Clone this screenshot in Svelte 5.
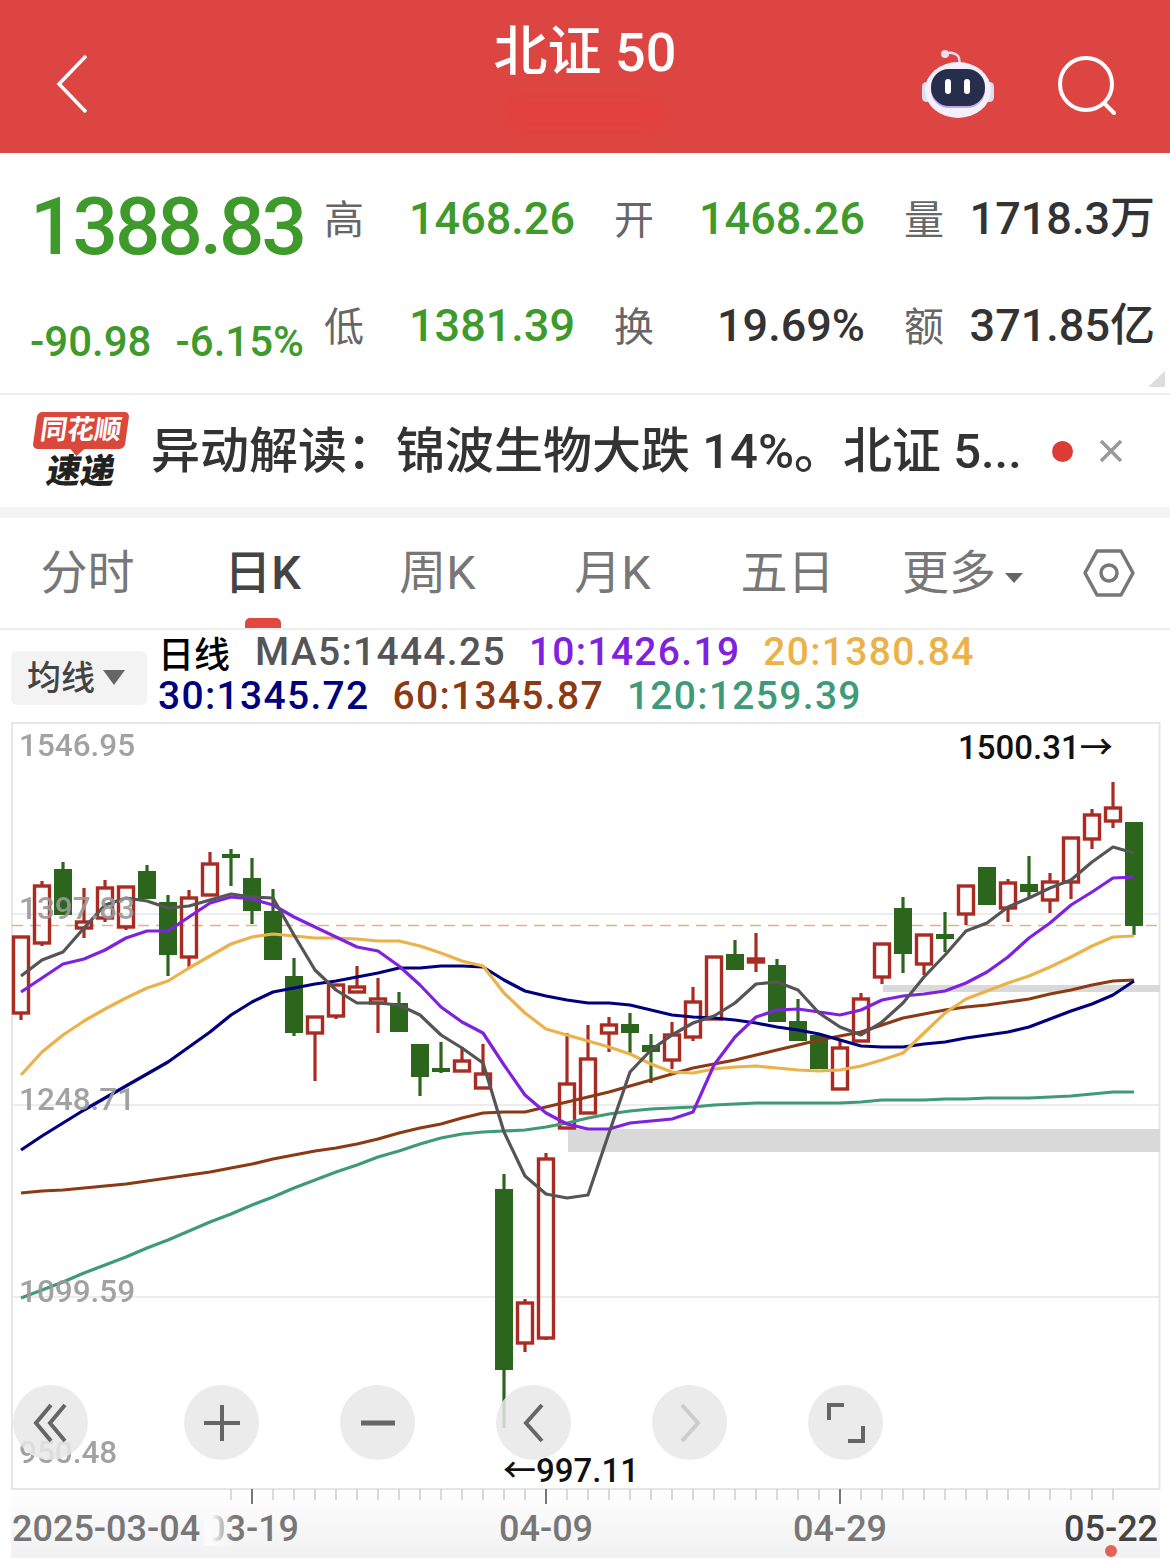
<script>
	// quote figures
	const quote = [
		[['高', '1468.26', 'down'], ['开', '1468.26', 'down'], ['量', '1718.3万', 'cjk']],
		[['低', '1381.39', 'down'], ['换', '19.69%', ''], ['额', '371.85亿', 'cjk']]
	];
	const tabs = ['分时', '日K', '周K', '月K', '五日'];

	const legend = [
		[
			['MA5:1444.25', '#555'],
			['10:1426.19', '#7f22e0'],
			['20:1380.84', '#ecb24a']
		],
		[
			['30:1345.72', '#00007f'],
			['60:1345.87', '#8b3a13'],
			['120:1259.39', '#3f9a77']
		]
	];

	// up (red, hollow) / down (green, filled): [up, bodyTop, bodyBottom, wickTop, wickBottom]
	const candles = [
		[1, 937, 1013, 937, 1020], [1, 886, 943, 881, 946], [0, 869, 915, 862, 915], [1, 922, 928, 888, 938],
		[1, 888, 918, 880, 922], [1, 887, 927, 887, 930], [0, 871, 899, 865, 899], [0, 902, 955, 895, 976],
		[1, 898, 957, 890, 968], [1, 864, 895, 852, 895], [0, 854, 858, 849, 886], [0, 878, 911, 858, 924],
		[0, 911, 960, 889, 960], [0, 976, 1033, 958, 1036], [1, 1017, 1033, 1017, 1081], [1, 985, 1016, 985, 1019],
		[1, 987, 992, 966, 992], [1, 999, 1003, 978, 1033], [0, 1003, 1032, 992, 1032], [0, 1044, 1077, 1044, 1096],
		[0, 1068, 1072, 1042, 1073], [1, 1061, 1071, 1047, 1071], [1, 1074, 1088, 1044, 1088], [0, 1189, 1370, 1174, 1428],
		[1, 1303, 1343, 1299, 1352], [1, 1159, 1338, 1153, 1340], [1, 1084, 1128, 1033, 1128], [1, 1059, 1113, 1025, 1113],
		[1, 1025, 1033, 1017, 1052], [0, 1024, 1033, 1013, 1053], [0, 1045, 1052, 1034, 1083], [1, 1035, 1060, 1022, 1069],
		[1, 1002, 1037, 987, 1041], [1, 957, 1019, 957, 1019], [0, 954, 970, 940, 970], [1, 959, 962, 933, 972],
		[0, 965, 1022, 959, 1022], [0, 1021, 1041, 999, 1041], [0, 1035, 1069, 1035, 1069], [1, 1048, 1089, 1040, 1089],
		[1, 999, 1041, 993, 1041], [1, 944, 977, 944, 984], [0, 908, 954, 897, 973], [1, 935, 964, 935, 975],
		[0, 934, 939, 912, 952], [1, 886, 914, 886, 925], [0, 867, 905, 867, 905], [1, 883, 908, 879, 922],
		[0, 884, 892, 856, 897], [1, 882, 900, 873, 913], [1, 838, 882, 838, 899], [1, 815, 839, 809, 849],
		[1, 808, 821, 782, 828], [0, 822, 926, 822, 935]
	];

	// y values per trading day, x = 21 + 21 * i
	const ma5 = [976, 960, 952, 928, 905, 898, 901, 908, 906, 900, 894, 897, 898, 935, 970, 990, 1003, 1003, 1005, 1015, 1035, 1048, 1063, 1132, 1176, 1194, 1198, 1195, 1133, 1072, 1050, 1035, 1023, 1016, 1003, 984, 982, 990, 1013, 1027, 1035, 1022, 1003, 977, 955, 931, 923, 907, 898, 888, 880, 862, 847, 853];
	const ma10 = [992, 978, 964, 959, 950, 938, 931, 931, 917, 903, 897, 899, 905, 917, 927, 937, 947, 951, 966, 985, 1007, 1022, 1033, 1065, 1095, 1113, 1124, 1129, 1129, 1123, 1121, 1119, 1112, 1065, 1037, 1017, 1010, 1009, 1012, 1015, 1010, 1000, 996, 994, 991, 983, 972, 957, 938, 923, 905, 892, 878, 877];
	const ma20 = [1075, 1052, 1035, 1021, 1009, 998, 988, 981, 968, 956, 944, 937, 934, 936, 938, 938, 939, 941, 941, 946, 953, 961, 966, 993, 1013, 1029, 1035, 1041, 1047, 1054, 1064, 1072, 1073, 1069, 1067, 1066, 1068, 1070, 1071, 1070, 1066, 1060, 1053, 1033, 1013, 999, 991, 983, 976, 967, 957, 946, 937, 936];
	const ma30 = [1150, 1136, 1123, 1110, 1098, 1086, 1074, 1062, 1047, 1032, 1015, 1002, 992, 988, 984, 981, 977, 973, 968, 968, 966, 966, 967, 980, 991, 996, 1000, 1003, 1003, 1005, 1010, 1015, 1017, 1018, 1020, 1023, 1027, 1030, 1034, 1040, 1046, 1047, 1047, 1044, 1042, 1038, 1035, 1032, 1027, 1019, 1011, 1004, 995, 981];
	const ma60 = [1193, 1191, 1190, 1188, 1186, 1184, 1181, 1178, 1175, 1172, 1168, 1164, 1159, 1155, 1151, 1148, 1144, 1139, 1133, 1128, 1124, 1118, 1113, 1112, 1112, 1107, 1102, 1097, 1092, 1086, 1080, 1074, 1068, 1064, 1060, 1055, 1050, 1045, 1040, 1036, 1032, 1025, 1018, 1014, 1010, 1007, 1005, 1002, 999, 994, 990, 985, 981, 980];
	const ma120 = [1298, 1290, 1282, 1273, 1265, 1257, 1248, 1240, 1231, 1222, 1214, 1205, 1197, 1188, 1180, 1172, 1165, 1157, 1151, 1144, 1138, 1134, 1132, 1131, 1130, 1127, 1123, 1118, 1114, 1111, 1109, 1108, 1107, 1105, 1104, 1103, 1103, 1103, 1103, 1103, 1102, 1100, 1100, 1100, 1099, 1099, 1098, 1098, 1098, 1097, 1096, 1094, 1092, 1092];
	const lines = [
		[ma120, '#3f9a77'],
		[ma60, '#8b3a13'],
		[ma30, '#00007f'],
		[ma20, '#ecb24a'],
		[ma10, '#7f22e0'],
		[ma5, '#555']
	];
	const cx = (i) => 21 + 21 * i;
	const pts = (ys) => ys.map((y, i) => cx(i) + ',' + y).join(' ');

	const priceLabels = [
		['1546.95', 756],
		['1397.83', 919],
		['1248.71', 1110],
		['1099.59', 1302],
		['950.48', 1463]
	];
	const dates = [
		['2025-03-04', 12, '#777'],
		['03-19', 205, '#777'],
		['04-09', 499, '#777'],
		['04-29', 793, '#777'],
		['05-22', 1064, '#444']
	];
	const ticks = Array.from({ length: 43 }, (_, i) => 231 + 21 * i);
	const majors = [252, 546, 840, 1134];
</script>

<div class="page">
	<header class="top">
		<svg class="back" width="34" height="60" viewBox="0 0 34 60">
			<path d="M31 2 L4 30 L31 58" fill="none" stroke="#fff" stroke-width="3.5" />
		</svg>
		<div class="title">
			<div class="name">北证 50</div>
			<div class="blur"></div>
		</div>
		<svg class="robot" width="74" height="70" viewBox="0 0 74 70">
			<path d="M24 6 C27 2 33 4 36 6 C39 8 38 12 39 16" fill="none" stroke="#e9d8ee" stroke-width="2.5" />
			<circle cx="24" cy="5" r="4" fill="#efdfef" />
			<rect x="1" y="33" width="9" height="20" rx="4.5" fill="#dcdcf2" />
			<rect x="64" y="33" width="9" height="20" rx="4.5" fill="#dcdcf2" />
			<ellipse cx="37" cy="41" rx="33" ry="28" fill="#f3f0fb" />
			<rect x="10" y="21" width="54" height="38" rx="18" fill="#b9a8ec" />
			<rect x="10" y="20" width="54" height="37" rx="18" fill="#272e4c" />
			<rect x="24" y="30" width="6" height="15" rx="3" fill="#fff" />
			<rect x="43" y="30" width="6" height="15" rx="3" fill="#fff" />
		</svg>
		<svg class="search" width="60" height="60" viewBox="0 0 60 60">
			<circle cx="29" cy="28" r="26" fill="none" stroke="#fff" stroke-width="4" />
			<path d="M47 47 L57 57" stroke="#fff" stroke-width="4" stroke-linecap="round" />
		</svg>
	</header>

	<section class="quote">
		<div class="now">
			<div class="price">1388.83</div>
			<div class="change"><span>-90.98</span><span>-6.15%</span></div>
		</div>
		<div class="figures">
			{#each quote as row}
				{#each row as [label, value, tone]}
					<div class="pair">
						<span class="label">{label}</span>
						<span class="value" class:down={tone === 'down'} class:cjk={tone === 'cjk'}>{value}</span>
					</div>
				{/each}
			{/each}
		</div>
		<div class="corner"></div>
	</section>

	<section class="news">
		<div class="logo">
			<div class="bubble"><span>同花顺</span></div>
			<div class="fast">速递</div>
		</div>
		<div class="headline">异动解读：锦波生物大跌 14%。北证 5...</div>
		<span class="dot"></span>
		<svg class="close" width="26" height="26" viewBox="0 0 26 26">
			<path d="M3 3 L23 23 M23 3 L3 23" stroke="#999" stroke-width="3.5" />
		</svg>
	</section>

	<nav class="tabs">
		{#each tabs as tab, i}
			<div class="tab" class:active={i === 1}>{tab}</div>
		{/each}
		<div class="tab more">更多<i></i></div>
		<svg class="hex" width="52" height="50" viewBox="0 0 52 50">
			<path d="M14 3 H38 L50 25 L38 47 H14 L2 25 Z" fill="none" stroke="#777" stroke-width="3.5" stroke-linejoin="round" />
			<circle cx="26" cy="25" r="8" fill="none" stroke="#777" stroke-width="3.5" />
		</svg>
	</nav>

	<section class="legend">
		<div class="avg">均线<i></i></div>
		<div class="ma">
			<div class="ma-row">
				<b>日线</b>
				{#each legend[0] as [text, color]}
					<span style="color: {color}">{text}</span>
				{/each}
			</div>
			<div class="ma-row">
				{#each legend[1] as [text, color]}
					<span style="color: {color}">{text}</span>
				{/each}
			</div>
		</div>
	</section>

	<div class="chart">
		<svg width="1170" height="836" viewBox="0 722 1170 836">
			<defs>
				<linearGradient id="foot" x1="0" y1="0" x2="0" y2="1">
					<stop offset="0" stop-color="#fff" />
					<stop offset="1" stop-color="#f1f1f1" />
				</linearGradient>
				<linearGradient id="fade" x1="0" y1="0" x2="1" y2="0">
					<stop offset="0.25" stop-color="#fbfbfb" />
					<stop offset="1" stop-color="#fbfbfb" stop-opacity="0" />
				</linearGradient>
			</defs>

			<rect x="11" y="1489" width="1149" height="69" fill="url(#foot)" />
			<rect x="12" y="723" width="1147.5" height="766" fill="#fff" stroke="#e6e6e6" stroke-width="2" />
			<path d="M12 914 H1160 M12 1105 H1160 M12 1297 H1160" stroke="#e6e6e6" stroke-width="1.5" />

			<rect x="568" y="1129" width="592" height="23" fill="#d9d9d9" />
			<rect x="883" y="985" width="277" height="7" fill="#d9d9d9" />

			<path d="M12 925.5 H1160" stroke="#d9b48c" stroke-width="1.5" stroke-dasharray="11 7" />

			{#each candles as [up, top, bottom, wickTop, wickBottom], i}
				{#if up}
					<path d="M{cx(i)} {wickTop} V{top} M{cx(i)} {bottom} V{wickBottom}" stroke="#a92b22" stroke-width="3.2" />
					<rect x={cx(i) - 7.5} y={top} width="15" height={bottom - top} fill="none" stroke="#a92b22" stroke-width="3.4" />
				{:else}
					<path d="M{cx(i)} {wickTop} V{wickBottom}" stroke="#2c661c" stroke-width="3.2" />
					<rect x={cx(i) - 9} y={top} width="18" height={bottom - top} fill="#2c661c" />
				{/if}
			{/each}

			{#each lines as [ys, color]}
				<polyline points={pts(ys)} fill="none" stroke={color} stroke-width="3.2" stroke-linejoin="round" />
			{/each}

			{#each priceLabels as [text, y]}
				<text class="axis-price" x="19" {y}>{text}</text>
			{/each}

			<text class="mark" x="958" y="759">1500.31→</text>
			<text class="mark" x="503" y="1482">←997.11</text>

			{#each ticks as x}
				<path d="M{x} 1489 V{majors.includes(x) ? 1504 : 1500}" stroke={majors.includes(x) ? '#777' : '#ccc'} stroke-width={majors.includes(x) ? 2 : 1.5} />
			{/each}
			{#each dates as [text, x, color]}
				<text class="date" {x} y="1541" fill={color}>{text}</text>
			{/each}
			<rect x="204" y="1512" width="30" height="34" fill="url(#fade)" />
			<circle cx="1111" cy="1551" r="6" fill="#e0645c" />
		</svg>

		<div class="controls">
			<button aria-label="first">
				<svg width="40" height="44" viewBox="0 0 40 44"><path d="M20 4 L5 22 L20 40 M34 4 L19 22 L34 40" fill="none" stroke="#666" stroke-width="4" /></svg>
			</button>
			<button aria-label="zoom in">
				<svg width="40" height="44" viewBox="0 0 40 44"><path d="M2 22 H38 M20 4 V40" fill="none" stroke="#666" stroke-width="4" /></svg>
			</button>
			<button aria-label="zoom out">
				<svg width="40" height="44" viewBox="0 0 40 44"><path d="M3 22 H37" fill="none" stroke="#666" stroke-width="5" /></svg>
			</button>
			<button aria-label="previous">
				<svg width="40" height="44" viewBox="0 0 40 44"><path d="M28 4 L12 22 L28 40" fill="none" stroke="#666" stroke-width="4" /></svg>
			</button>
			<button aria-label="next">
				<svg width="40" height="44" viewBox="0 0 40 44"><path d="M12 4 L28 22 L12 40" fill="none" stroke="#ccc" stroke-width="4" /></svg>
			</button>
			<button aria-label="fullscreen">
				<svg width="40" height="44" viewBox="0 0 40 44"><path d="M3 19 V4 H18 M37 25 V40 H22" fill="none" stroke="#666" stroke-width="4" /></svg>
			</button>
		</div>
	</div>
</div>

<style>
	:global(body) {
		margin: 0;
		background: #fff;
	}

	.page {
		width: 1170px;
		height: 1558px;
		overflow: hidden;
		font-family: Roboto, 'Noto Sans CJK SC', sans-serif;
	}

	.top {
		height: 153px;
		background: #dd4542;
		display: flex;
		align-items: flex-start;
		position: relative;
	}

	.back {
		margin: 54px 0 0 55px;
	}

	.title {
		position: absolute;
		left: 0;
		right: 0;
		top: 22px;
		text-align: center;
		color: #fff;
	}

	.name {
		font-size: 54px;
		line-height: 62px;
		font-weight: 500;
	}

	.blur {
		width: 160px;
		height: 30px;
		margin: 15px auto 0;
		background: #e63f3a;
		opacity: 0.7;
		filter: blur(9px);
	}

	.robot {
		margin: 49px 0 0 auto;
	}

	.search {
		margin: 56px 53px 0 62px;
	}

	.quote {
		height: 240px;
		border-bottom: 2px solid #eee;
		display: flex;
		position: relative;
	}

	.now {
		width: 324px;
		flex: none;
		padding-left: 30px;
		box-sizing: border-box;
	}

	.price {
		font-size: 80px;
		line-height: 94px;
		margin: 27px 0 0 0;
		font-weight: 500;
		letter-spacing: -3px;
		color: #3f9a2c;
	}

	.change {
		display: flex;
		justify-content: space-between;
		width: 274px;
		margin-top: 44px;
		font-size: 42px;
		line-height: 48px;
		font-weight: 500;
		color: #3f9a2c;
	}

	.figures {
		display: grid;
		grid-template-columns: repeat(3, 251px);
		column-gap: 39px;
		grid-auto-rows: 107px;
		margin-top: 12px;
		align-items: center;
	}

	.pair {
		display: flex;
		justify-content: space-between;
		align-items: center;
	}

	.label {
		font-size: 40px;
		margin-top: -4px;
		color: #666;
	}

	.value {
		font-size: 45px;
		font-weight: 500;
		color: #333;
		white-space: nowrap;
	}

	.value.down {
		color: #3f9a2c;
	}

	.value.cjk {
		margin-top: -8px;
	}

	.corner {
		position: absolute;
		right: 5px;
		bottom: 6px;
		width: 0;
		height: 0;
		border-left: 17px solid transparent;
		border-bottom: 16px solid #ddd;
	}

	.news {
		height: 112px;
		border-bottom: 11px solid #f4f4f4;
		display: flex;
		align-items: center;
	}

	.logo {
		width: 92px;
		margin-left: 35px;
		flex: none;
	}

	.bubble {
		height: 37px;
		background: #d9483b;
		border-radius: 5px;
		transform: skewX(-8deg);
		text-align: center;
		position: relative;
	}

	.bubble::after {
		content: '';
		position: absolute;
		left: 38px;
		bottom: -7px;
		border: 7px solid transparent;
		border-top-color: #d9483b;
		border-bottom: 0;
	}

	.bubble span {
		color: #fff;
		font-size: 27px;
		font-weight: 700;
		line-height: 37px;
		display: block;
	}

	.fast {
		font-size: 34px;
		font-weight: 900;
		line-height: 38px;
		color: #222;
		text-align: center;
		margin-top: 3px;
		transform: skewX(-10deg);
	}

	.headline {
		margin: -10px 0 0 24px;
		width: 900px;
		font-size: 49px;
		font-weight: 500;
		color: #333;
		white-space: nowrap;
	}

	.dot {
		width: 21px;
		height: 21px;
		border-radius: 50%;
		background: #dd3c36;
		flex: none;
		margin-left: 1px;
	}

	.close {
		margin-left: 25px;
		flex: none;
	}

	.tabs {
		height: 110px;
		border-bottom: 2px solid #eee;
		display: flex;
		align-items: center;
	}

	.tab {
		width: 175px;
		flex: none;
		text-align: center;
		font-size: 47px;
		color: #777;
		position: relative;
		line-height: 110px;
		height: 110px;
	}

	.tab.active {
		color: #444;
		font-weight: 500;
	}

	.tab.active::after {
		content: '';
		position: absolute;
		left: 70px;
		bottom: 0;
		width: 36px;
		height: 10px;
		border-radius: 5px 5px 0 0;
		background: #e1483f;
	}

	.tab.more i {
		display: inline-block;
		margin-left: 9px;
		vertical-align: 6px;
		border: 9px solid transparent;
		border-top: 10px solid #666;
		border-bottom: 0;
	}

	.hex {
		margin-left: 33px;
	}

	.legend {
		height: 92px;
		display: flex;
		align-items: center;
	}

	.avg {
		width: 136px;
		height: 54px;
		margin: 4px 0 0 11px;
		flex: none;
		border-radius: 6px;
		background: #f3f3f3;
		color: #444;
		font-size: 34px;
		font-weight: 500;
		line-height: 54px;
		padding-left: 16px;
		box-sizing: border-box;
		white-space: nowrap;
	}

	.avg i {
		display: inline-block;
		margin-left: 8px;
		vertical-align: 5px;
		border: 11px solid transparent;
		border-top: 15px solid #666;
		border-bottom: 0;
	}

	.ma {
		margin-left: 11px;
		padding-bottom: 4px;
	}

	.ma-row {
		display: flex;
		align-items: center;
		gap: 23px;
		height: 44px;
		font-size: 39px;
		font-weight: 500;
		letter-spacing: 1.3px;
		white-space: nowrap;
	}

	.ma-row b {
		font-size: 36px;
		font-weight: 500;
		letter-spacing: 0;
		color: #000;
		margin-right: 2px;
	}

	.chart {
		position: relative;
		height: 836px;
	}

	.chart svg {
		display: block;
	}

	.axis-price {
		font-size: 31.5px;
		font-weight: 500;
		fill: #999;
		opacity: 0.9;
	}

	.mark {
		font-size: 33px;
		font-weight: 500;
		fill: #111;
	}

	.date {
		font-size: 36px;
		font-weight: 500;
	}

	.controls {
		position: absolute;
		left: 13px;
		top: 663px;
		display: flex;
		gap: 81px;
	}

	.controls button {
		width: 75px;
		height: 75px;
		padding: 0;
		border: 0;
		border-radius: 50%;
		background: rgba(232, 232, 232, 0.85);
		display: flex;
		align-items: center;
		justify-content: center;
	}

	.controls button:first-child {
		margin-right: 15px;
	}
</style>
